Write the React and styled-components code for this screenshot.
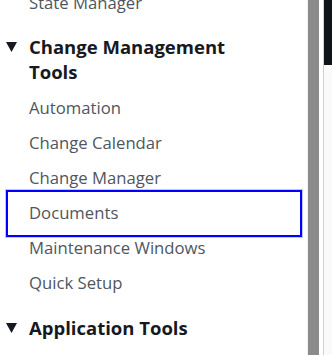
import { Fragment } from "react";
import styled, { createGlobalStyle } from "styled-components";

const GlobalStyle = createGlobalStyle`
  html, body {
    margin: 0;
    padding: 0;
    background: #ffffff;
  }
  body {
    font-family: "Open Sans", "Noto Sans", sans-serif;
    overflow: hidden;
  }
`;

const Page = styled.div`
  display: flex;
  width: 332px;
  height: 355px;
  overflow: hidden;
`;

const Nav = styled.nav`
  width: 307px;
  flex-shrink: 0;
  overflow: hidden;
`;

const List = styled.ul`
  list-style: none;
  margin: -15px 0 0;
  padding: 0;
`;

const Item = styled.li`
  position: relative;
  height: 35px;
  display: flex;
  align-items: center;
  padding-left: 29px;
  font-size: 16.7px;
  color: #4f5660;
  white-space: nowrap;

  ${(p) =>
    p.$focused &&
    `
    &::after {
      content: "";
      position: absolute;
      left: 6px;
      right: 5px;
      top: -5px;
      bottom: -7px;
      border: 2px solid #0000ff;
      box-shadow: 0 0 0 1px rgba(80, 80, 255, 0.35);
    }
  `}
`;

const Section = styled.li`
  display: flex;
  align-items: flex-start;
  padding-left: 6px;
  margin: ${(p) => p.$margin};
  font-size: 18.5px;
  font-weight: 700;
  line-height: 25px;
  color: #16191f;
  white-space: nowrap;
`;

const Caret = styled.svg`
  width: 11px;
  height: 10px;
  margin: 8px 12px 0 0;
  flex-shrink: 0;
`;

const Track = styled.div`
  width: 12px;
  flex-shrink: 0;
  background: #f1f1f1;
  display: flex;
  justify-content: flex-end;
`;

const Thumb = styled.div`
  width: 11px;
  height: 100%;
  background: #8b8b8b;
`;

const Main = styled.div`
  flex: 1;
  margin-left: 4px;
  border-left: 1px solid #d0d0d0;
  background: #fafafa;
  display: flex;
  flex-direction: column;
`;

const Header = styled.div`
  height: 65px;
  background: #0f141a;
`;

const DownCaret = () => (
  <Caret viewBox="0 0 11 10">
    <path d="M0 0 H11 L5.5 10 Z" fill="#16191f" />
  </Caret>
);

const sections = [
  {
    title: "Change Management Tools",
    lines: ["Change Management", "Tools"],
    items: [
      "Automation",
      "Change Calendar",
      "Change Manager",
      "Documents",
      "Maintenance Windows",
      "Quick Setup",
    ],
  },
];

export default function App() {
  return (
    <Page>
      <GlobalStyle />
      <Nav>
        <List>
          <Item>State Manager</Item>
          {sections.map((s) => (
            <Fragment key={s.title}>
              <Section $margin="14px 0 6px">
                <DownCaret />
                <span>
                  {s.lines.map((l) => (
                    <div key={l}>{l}</div>
                  ))}
                </span>
              </Section>
              {s.items.map((it) => (
                <Item key={it} $focused={it === "Documents"}>
                  {it}
                </Item>
              ))}
            </Fragment>
          ))}
          <Section $margin="15px 0 0">
            <DownCaret />
            <span>Application Tools</span>
          </Section>
        </List>
      </Nav>
      <Track>
        <Thumb />
      </Track>
      <Main>
        <Header />
      </Main>
    </Page>
  );
}
